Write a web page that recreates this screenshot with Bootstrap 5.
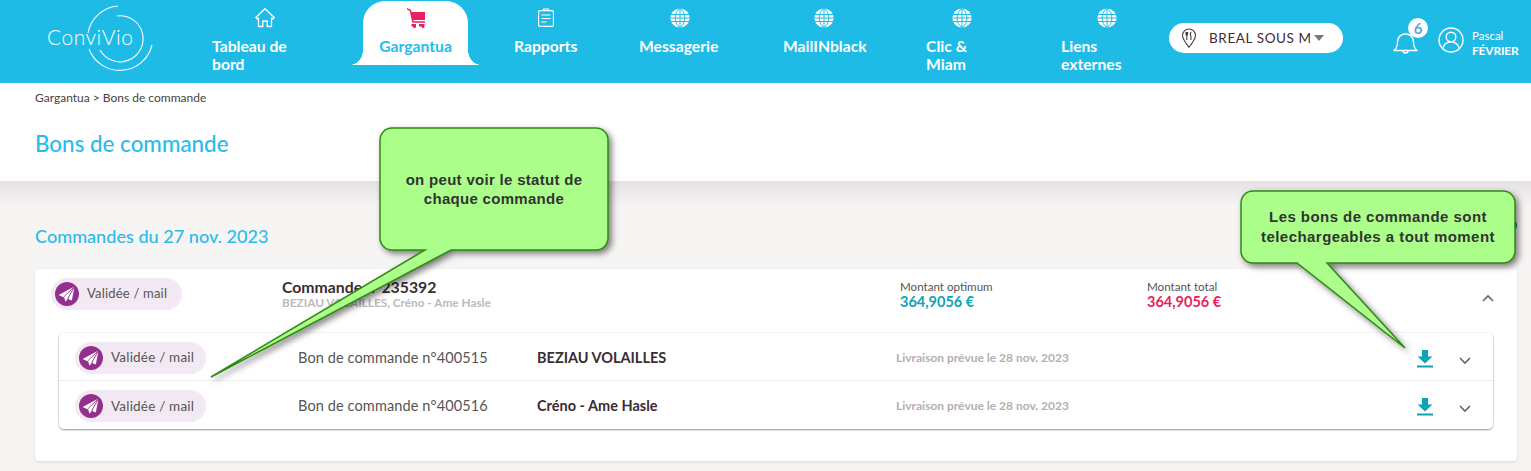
<!DOCTYPE html>
<html lang="fr">

<head>
  <meta charset="UTF-8">
  <meta name="viewport" content="width=device-width, initial-scale=1.0" />
  <title>Bons de commande</title>
  <link href="https://cdn.jsdelivr.net/npm/bootstrap@5.3.0/dist/css/bootstrap.min.css" rel="stylesheet">
  <style>
    html, body { height: 471px; overflow: hidden; }
    body {
      position: relative;
      background: #f7f4f4;
      font-family: "Lato", "Open Sans", sans-serif;
      color: #444;
    }

    /* header */
    .top-bar { height: 83px; background: #1dbbe6; color: #fff; }
    .logo-box { width: 212px; height: 83px; flex: none; }
    .logo-txt { font-family: "Lato", sans-serif; font-weight: 300; font-size: 21px; fill: #fff; letter-spacing: .5px; }
    .nav-cell {
      flex: none;
      display: block;
      height: 64px;
      padding-top: 8px;
      color: #fff;
      font-weight: 700;
      font-size: 15.7px;
      line-height: 18px;
      text-decoration: none;
    }
    .nav-cell svg { display: block; margin: 0 auto 9px; }
    .nav-cell.is-active {
      position: relative;
      margin-top: 1px;
      padding-top: 7px;
      background: #fff;
      color: #29bbe9;
      border-radius: 22px 22px 0 0;
      text-align: center;
    }
    .nav-cell.is-active::before,
    .nav-cell.is-active::after {
      content: "";
      position: absolute;
      bottom: 0;
      width: 13px;
      height: 15px;
    }
    .nav-cell.is-active::before { left: -13px; background: radial-gradient(ellipse 13px 15px at 0 0, transparent 98%, #fff 100%); }
    .nav-cell.is-active::after { right: -13px; background: radial-gradient(ellipse 13px 15px at 100% 0, transparent 98%, #fff 100%); }
    .w-home { width: 106px; margin-right: 45px; }
    .w-garg { width: 105px; margin-right: 46px; }
    .w-rapp { width: 64px; margin-right: 61px; }
    .w-mess { width: 82px; margin-right: 62px; }
    .w-mail { width: 81px; margin-right: 62px; }
    .w-clic { width: 72px; margin-right: 63px; }
    .w-lien { width: 92px; margin-right: 16px; }

    .site-pick {
      flex: none;
      width: 174px;
      height: 30px;
      margin-top: 23px;
      padding-left: 12px;
      background: #fff;
      border-radius: 15px;
      color: #3d2b33;
      font-size: 13.5px;
      letter-spacing: .6px;
    }
    .site-caret { width: 0; height: 0; margin-left: 2px; border: 5px solid transparent; border-top: 6px solid #777; border-bottom: 0; }
    .bell-box { position: relative; flex: none; width: 26px; height: 26px; margin: 28px 0 0 50px; }
    .bell-count {
      position: absolute;
      top: -10px;
      left: 15px;
      width: 20px;
      height: 20px;
      border-radius: 50%;
      background: #fff;
      color: #5aa9e6;
      font-size: 15px;
      font-weight: 700;
      line-height: 20px;
      text-align: center;
    }
    .user-box { flex: none; margin: 27px 0 0 19px; }
    .user-name { font-size: 11.5px; line-height: 15px; margin-top: 1px; }
    .user-name b { display: block; font-size: 12px; letter-spacing: -.2px; }

    /* title zone */
    .title-zone { height: 98px; padding: 8px 35px 0; background: #fff; }
    .crumb { font-size: 12px; line-height: 14px; color: #444; }
    .page-title { margin: 24px 0 0; font-size: 22.4px; line-height: 30px; font-weight: 500; color: #29bbe9; }
    .shade-zone { height: 88px; padding: 41px 14px 0 35px; background: linear-gradient(#e6e2e3, #f7f4f4 26px); }
    .day-title { margin: 0; font-size: 18.1px; line-height: 28px; font-weight: 500; color: #29bbe9; }
    .round-btn { width: 30px; height: 15px; margin-top: -4px; background: #0b7f8c; border-radius: 8px; }

    /* order card */
    .order-card { margin: 0 14px 0 35px; height: 192px; border: 0; border-radius: 4px; box-shadow: 0 1px 3px rgba(0, 0, 0, .12); }
    .order-head { height: 64px; padding: 9px 0 0 16px; }
    .state-pill {
      flex: none;
      width: 131px;
      height: 32px;
      padding: 0 4px;
      border-radius: 16px;
      background: #f3e9f3;
      color: #555;
      font-size: 13.5px;
      letter-spacing: .2px;
    }
    .order-head .state-pill { font-size: 13px; }
    .state-dot { flex: none; width: 24px; height: 24px; margin-right: 8px; }
    .cmd-col { width: 618px; margin-left: 100px; }
    .cmd-name { margin-top: -1px; font-size: 15.8px; line-height: 19px; font-weight: 700; color: #3a2d33; }
    .cmd-sub { font-size: 11.8px; line-height: 14px; font-weight: 700; color: #bdb9ba; }
    .sum-col { width: 247px; padding-top: 2px; }
    .sum-lbl { font-size: 11.6px; line-height: 14px; color: #555; }
    .sum-val { font-size: 14.5px; line-height: 16px; font-weight: 700; }
    .val-teal { color: #0fa3b5; }
    .val-red { color: #e91e5a; }
    .chev-up { margin: 16px 23px 0 auto; }

    .bon-list { margin: 0 24px 0 24px; border: 0; border-radius: 4px; box-shadow: 0 1px 2px rgba(0, 0, 0, .4), 0 0 3px rgba(0, 0, 0, .08); }
    .bon-row { height: 48px; padding: 2px 0 0 16px; border: 0; border-bottom: 1px solid #f1f0f0; }
    .bon-row:last-child { border-bottom: 0; }
    .bon-num { width: 239px; margin-left: 92px; flex: none; color: #555; font-size: 14.5px; letter-spacing: .12px; }
    .bon-shop { width: 359px; flex: none; color: #3a2d33; font-size: 14.5px; font-weight: 700; }
    .bon-date { width: 521px; flex: none; color: #b4b0b1; font-size: 12px; font-weight: 700; }
    .dl-ico { flex: none; width: 16px; height: 18px; margin: 2px 26px 0 0; }
    .chev-down { flex: none; margin-top: 6px; }

    /* green annotations over the page */
    .note-layer { position: absolute; top: 0; left: 0; pointer-events: none; }
    .note-layer path { fill: #abff8a; stroke: #2f8a12; stroke-width: 1.5; filter: drop-shadow(3px 3px 3px rgba(0, 0, 0, .5)); }
    .note-txt {
      position: absolute;
      font-family: "Liberation Sans", Arial, sans-serif;
      font-weight: 700;
      font-size: 15px;
      letter-spacing: .45px;
      text-align: center;
      color: #333;
    }
    .note-a { left: 380px; top: 170px; width: 228px; line-height: 19px; letter-spacing: .3px; }
    .note-b { left: 1241px; top: 207px; width: 274px; line-height: 20px; }
  </style>
</head>

<body>
  <svg width="0" height="0" class="position-absolute">
    <defs>
      <symbol id="globe" viewBox="0 0 20 20">
        <circle cx="10" cy="10" r="9.6" fill="#fff" />
        <g fill="none" stroke="#1dbbe6" stroke-width="1">
          <path d="M1 6.5h18M.5 10h19M1 13.5h18" />
          <path d="M10 .5v19M10 .5C3.5 4 3.5 16 10 19.5M10 .5c6.500 3.500 6.500 15.500 0 19" />
        </g>
      </symbol>
      <symbol id="plane" viewBox="0 0 24 24">
        <circle cx="12" cy="12" r="12" fill="#93308e" />
        <path d="M19.500 4.500 3.500 13l5 2.200 1.800 4.800 2.500-3.200 4 1.700z" fill="#fff" />
        <path d="M19.500 4.500 8.500 15.200l1.800 4.800M19.500 4.500 12.800 16.800" fill="none" stroke="#93308e" stroke-width=".9" />
      </symbol>
      <symbol id="dl" viewBox="0 0 16 18">
        <path d="M5 0h6v6.500h4.500L8 13.500.5 6.500H5z" fill="#0fa3b5" />
        <path d="M0 16.500h16" stroke="#0fa3b5" stroke-width="2" />
      </symbol>
    </defs>
  </svg>

  <header class="top-bar d-flex align-items-start">
    <div class="logo-box">
      <svg width="212" height="83" viewBox="0 0 212 83">
        <g fill="none" stroke="#fff" stroke-width="1.100">
          <path d="M118 6A33 33 0 0 0 88 33" />
          <path d="M89 49A33 33 0 0 0 152 45" />
          <path d="M117 16A23 23 0 1 1 100 50" />
        </g>
        <text x="47" y="45" class="logo-txt">ConviVio</text>
      </svg>
    </div>

    <a class="nav-cell w-home" href="#">
      <svg width="20" height="20" viewBox="0 0 20 20" fill="none" stroke="#fff" stroke-width="1.300" stroke-linejoin="round"><path d="M.8 9.500 10 .8l9.200 8.700-1.500 1.500-1.200-1.100v8.600h-4.300v-5.500H7.800v5.500H3.500V9.900L2.300 11z" /></svg>
      Tableau de bord
    </a>
    <a class="nav-cell w-garg is-active" href="#">
      <svg width="18" height="20" viewBox="0 0 18 20" fill="#e91e63"><path d="M0 0l3.800 1.800L4.700 4H18v8H6.200l.4 1.300H18v1.500H5.300L2.800 2.900 0 1.500z" /><path d="M4.500 16h4.500v2.500a1.500 1.500 0 0 1-3 0H4.500zM12 16h5.500v2.500a1.500 1.500 0 0 1-3 0H12z" /></svg>
      Gargantua
    </a>
    <a class="nav-cell w-rapp" href="#">
      <svg width="16" height="20" viewBox="0 0 16 20" fill="none" stroke="#fff" stroke-width="1.100"><rect x=".6" y="2.600" width="14.800" height="15.800" rx="1.200" /><path d="M5.500 2.600V1h5v1.600M3.500 7h9M3.500 10.500h9M3.500 14h5" /></svg>
      Rapports
    </a>
    <a class="nav-cell w-mess" href="#"><svg width="20" height="20"><use href="#globe" /></svg>Messagerie</a>
    <a class="nav-cell w-mail" href="#"><svg width="20" height="20"><use href="#globe" /></svg>MailINblack</a>
    <a class="nav-cell w-clic" href="#"><svg width="20" height="20"><use href="#globe" /></svg>Clic &amp; Miam</a>
    <a class="nav-cell w-lien" href="#"><svg width="20" height="20"><use href="#globe" /></svg>Liens externes</a>

    <div class="site-pick d-flex align-items-center">
      <svg width="16" height="20" viewBox="0 0 16 20" fill="none" stroke="#4a3a40" stroke-width="1.100" class="me-2 flex-shrink-0"><path d="M8 19.300C3.800 13.800 1.500 10.800 1.500 7.500a6.500 6.500 0 0 1 13 0c0 3.300-2.300 6.300-6.500 11.800z" /><path d="M5.800 4v3.500M5 4v2.400a.8.8 0 0 0 1.600 0V4M5.800 7v5M10.300 4c-1 .5-1.200 3-.4 4v4" /></svg>
      <span class="ms-1">BREAL SOUS M</span><span class="site-caret"></span>
    </div>

    <div class="bell-box">
      <svg width="26" height="26" viewBox="0 0 26 26" fill="none" stroke="#fff" stroke-width="1.400" stroke-linejoin="round"><path d="M1 21.500c2.500-2 3.500-4 3.500-8.500 0-5 3.500-8 8-8s8 3 8 8c0 4.500 1 6.500 3.500 8.500z" /><path d="M9.800 21.700c.3 3 5.100 3 5.400 0" /></svg>
      <span class="bell-count">6</span>
    </div>
    <div class="user-box d-flex">
      <svg width="26" height="26" viewBox="0 0 26 26" fill="none" stroke="#fff" stroke-width="1.400" class="me-2"><circle cx="13" cy="13" r="12" /><circle cx="13" cy="10" r="4.800" /><path d="M4.800 21.500c1-4 4-6.500 8.200-6.500s7.200 2.500 8.200 6.500" /></svg>
      <div class="user-name">Pascal<b>FÉVRIER</b></div>
    </div>
  </header>

  <section class="title-zone">
    <div class="crumb">Gargantua &gt; Bons de commande</div>
    <h1 class="page-title">Bons de commande</h1>
  </section>

  <section class="shade-zone d-flex justify-content-between">
    <h2 class="day-title">Commandes du 27 nov. 2023</h2>
    <div class="round-btn"></div>
  </section>

  <div class="card order-card">
    <div class="order-head d-flex align-items-start">
      <div class="state-pill d-flex align-items-center">
        <svg class="state-dot"><use href="#plane" /></svg>Validée / mail
      </div>
      <div class="cmd-col">
        <div class="cmd-name">Commande n°235392</div>
        <div class="cmd-sub">BEZIAU VOLAILLES, Créno - Ame Hasle</div>
      </div>
      <div class="sum-col">
        <div class="sum-lbl">Montant optimum</div>
        <div class="sum-val val-teal">364,9056 €</div>
      </div>
      <div class="sum-col">
        <div class="sum-lbl">Montant total</div>
        <div class="sum-val val-red">364,9056 €</div>
      </div>
      <svg class="chev-up" width="12" height="8" viewBox="0 0 12 8" fill="none" stroke="#666" stroke-width="1.600"><path d="M1 7l5-5 5 5" /></svg>
    </div>

    <ul class="list-group bon-list">
      <li class="list-group-item bon-row d-flex align-items-center">
        <div class="state-pill d-flex align-items-center"><svg class="state-dot"><use href="#plane" /></svg>Validée / mail</div>
        <span class="bon-num">Bon de commande n°400515</span>
        <span class="bon-shop">BEZIAU VOLAILLES</span>
        <span class="bon-date">Livraison prévue le 28 nov. 2023</span>
        <svg class="dl-ico"><use href="#dl" /></svg>
        <svg class="chev-down" width="12" height="8" viewBox="0 0 12 8" fill="none" stroke="#666" stroke-width="1.600"><path d="M1 1l5 5 5-5" /></svg>
      </li>
      <li class="list-group-item bon-row d-flex align-items-center">
        <div class="state-pill d-flex align-items-center"><svg class="state-dot"><use href="#plane" /></svg>Validée / mail</div>
        <span class="bon-num">Bon de commande n°400516</span>
        <span class="bon-shop">Créno - Ame Hasle</span>
        <span class="bon-date">Livraison prévue le 28 nov. 2023</span>
        <svg class="dl-ico"><use href="#dl" /></svg>
        <svg class="chev-down" width="12" height="8" viewBox="0 0 12 8" fill="none" stroke="#666" stroke-width="1.600"><path d="M1 1l5 5 5-5" /></svg>
      </li>
    </ul>
  </div>

  <!-- annotations -->
  <svg class="note-layer" width="1531" height="471" viewBox="0 0 1531 471">
    <path d="M392 128H596a12 12 0 0 1 12 12V238a12 12 0 0 1-12 12H451L211 377 425 250H392a12 12 0 0 1-12-12V140a12 12 0 0 1 12-12z" />
    <path d="M1253 191H1503a12 12 0 0 1 12 12V251a12 12 0 0 1-12 12H1327L1405 348 1297 263H1253a12 12 0 0 1-12-12V203a12 12 0 0 1 12-12z" />
  </svg>
  <div class="note-txt note-a">on peut voir le statut de<br>chaque commande</div>
  <div class="note-txt note-b">Les bons de commande sont<br>telechargeables a tout moment</div>
</body>

</html>
